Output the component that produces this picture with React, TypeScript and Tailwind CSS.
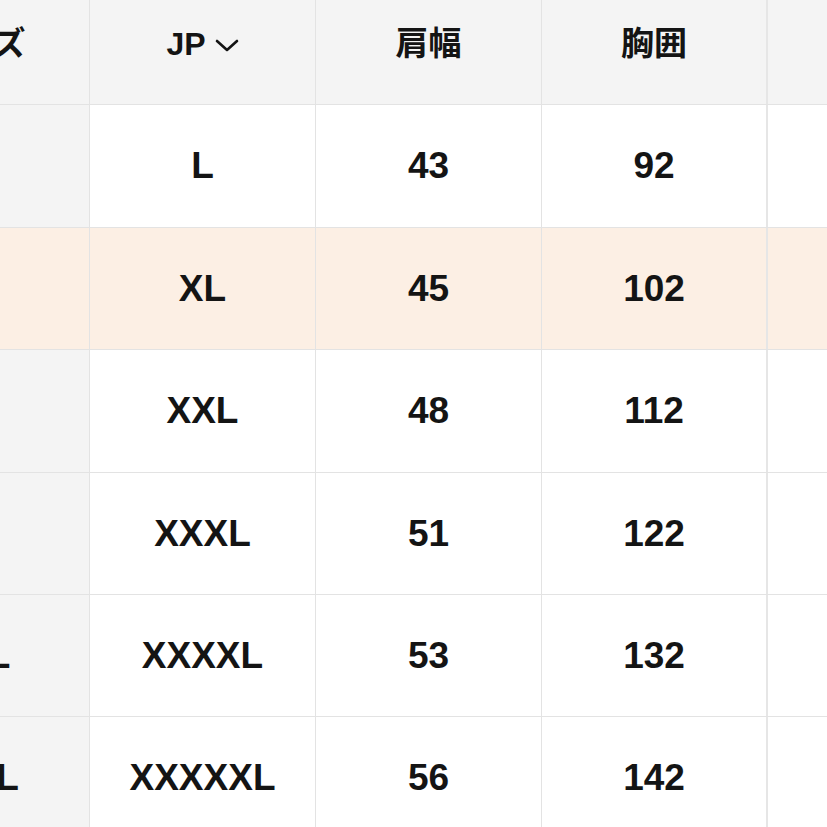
import React from "react";

const rows = [
  { a: "", jp: "L", s: "43", c: "92" },
  { a: "", jp: "XL", s: "45", c: "102", hl: true },
  { a: "", jp: "XXL", s: "48", c: "112" },
  { a: "", jp: "XXXL", s: "51", c: "122" },
  { a: "3XL", jp: "XXXXL", s: "53", c: "132" },
  { a: "XXXL", jp: "XXXXXL", s: "56", c: "142", shift: true },
];

const font = {
  fontFamily: '"Liberation Sans", "Noto Sans CJK JP", sans-serif',
};

export default function App() {
  return (
    <div className="w-[827px] h-[827px] overflow-hidden bg-white text-[#141414]" style={font}>
      <div className="ml-[-136px] mt-[-17px] w-[1130px]">
        <div className="flex h-[122.4px] bg-[#f4f4f4] border-b border-[#e3e3e3]">
          <div className="w-[226px] shrink-0 flex items-center justify-center border-r border-[#e3e3e3] text-[33px] font-bold">
            サイズ
          </div>
          <div className="w-[226px] shrink-0 flex items-center justify-center gap-[9px] border-r border-[#e3e3e3] text-[32px] font-bold">
            <span>JP</span>
            <svg width="24" height="13" viewBox="0 0 24 13" className="mt-[3px]">
              <path d="M2 2 L12 11 L22 2" fill="none" stroke="#141414" strokeWidth="2.6" strokeLinecap="round" strokeLinejoin="round" />
            </svg>
          </div>
          <div className="w-[226px] shrink-0 flex items-center justify-center border-r border-[#e3e3e3] text-[33px] font-bold">
            肩幅
          </div>
          <div className="w-[226px] shrink-0 flex items-center justify-center border-r-2 border-[#e6e6e6] text-[33px] font-bold">
            胸囲
          </div>
          <div className="w-[226px] shrink-0" />
        </div>
        {rows.map((r, i) => (
          <div
            key={i}
            className={`flex h-[122.4px] border-b border-[#e3e3e3] ${r.hl ? "bg-[#fcefe4]" : "bg-white"}`}
          >
            <div
              className={`w-[226px] shrink-0 flex items-center justify-center border-r border-[#e3e3e3] text-[37px] font-bold ${r.hl ? "bg-[#fcefe4]" : "bg-[#f4f4f4]"} ${r.shift ? "pr-[12px]" : ""}`}
            >
              {r.a}
            </div>
            <div className="w-[226px] shrink-0 flex items-center justify-center border-r border-[#e3e3e3] text-[37px] font-bold">
              {r.jp}
            </div>
            <div className="w-[226px] shrink-0 flex items-center justify-center border-r border-[#e3e3e3] text-[37px] font-bold">
              {r.s}
            </div>
            <div className="w-[226px] shrink-0 flex items-center justify-center border-r-2 border-[#e6e6e6] text-[37px] font-bold">
              {r.c}
            </div>
            <div className="w-[226px] shrink-0" />
          </div>
        ))}
      </div>
    </div>
  );
}
